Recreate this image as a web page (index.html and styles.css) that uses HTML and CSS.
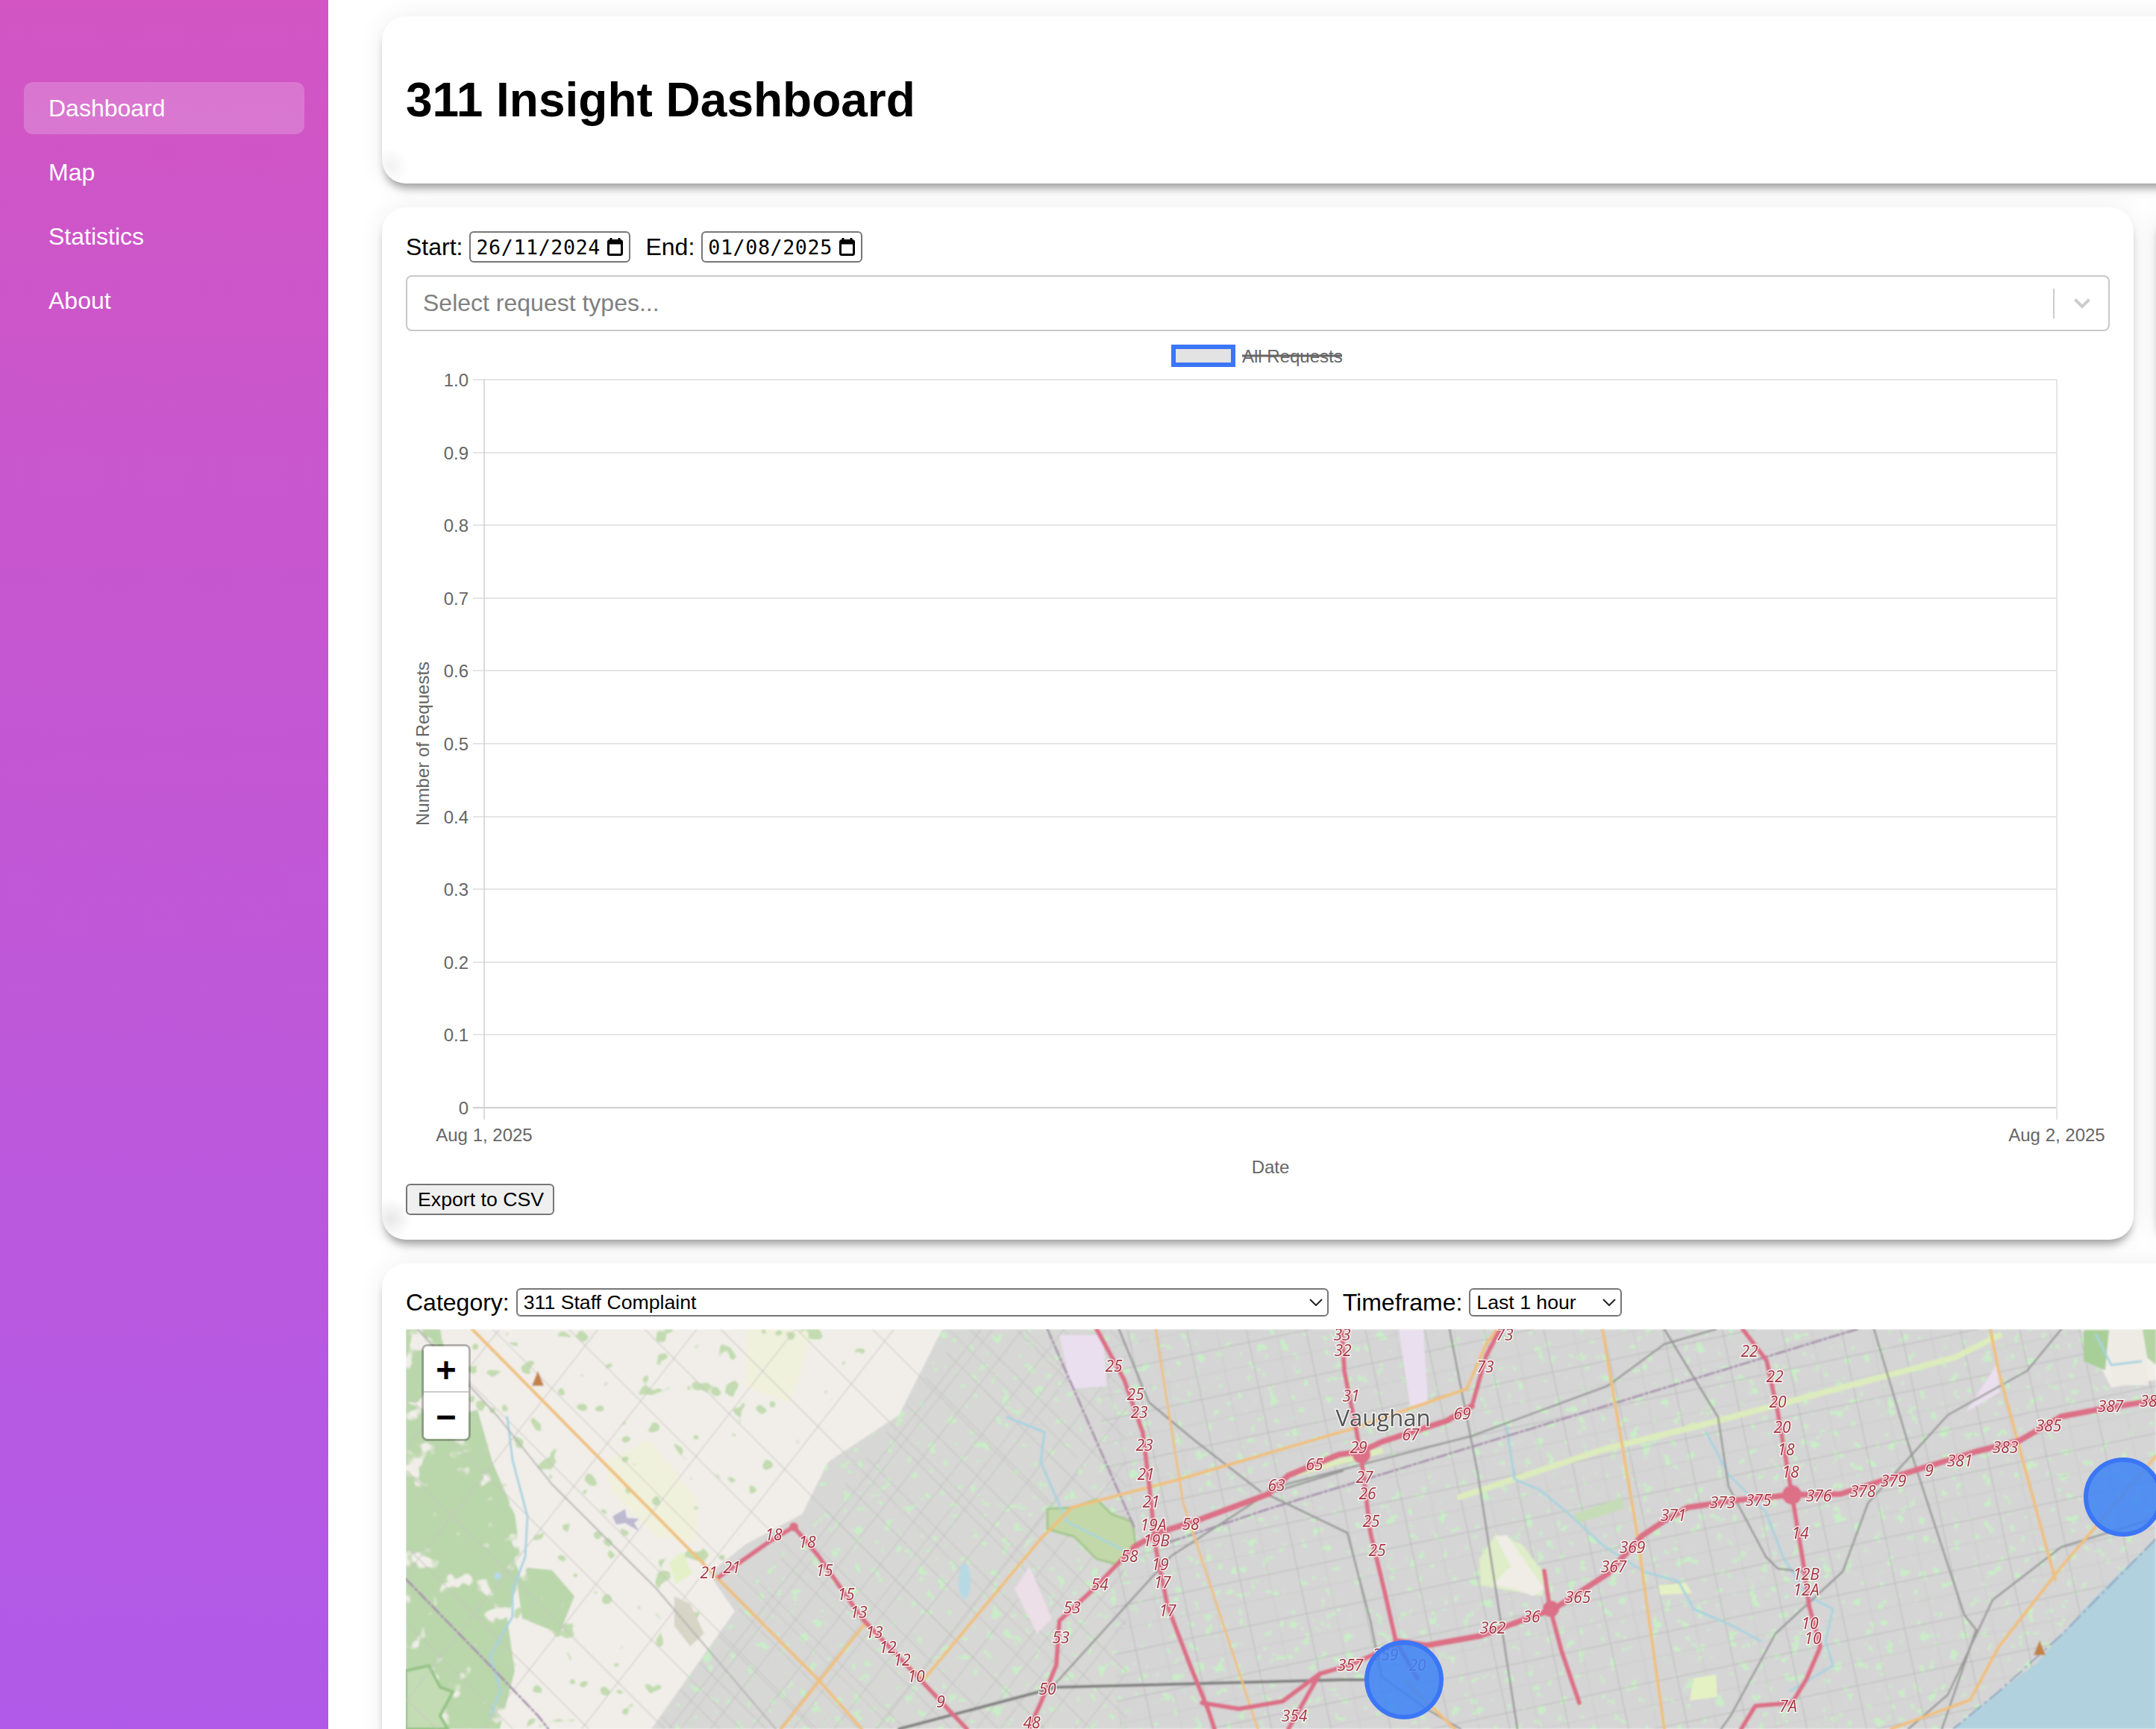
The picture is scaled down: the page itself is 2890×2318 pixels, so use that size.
FILE: index.html
```html
<!DOCTYPE html>
<html lang="en">
<head>
<meta charset="UTF-8">
<title>311 Insight Dashboard</title>
<link rel="stylesheet" href="styles.css">
</head>
<body>
<div class="layout">
    <nav class="sidebar">
        <a class="nav-item active">Dashboard</a>
        <a class="nav-item">Map</a>
        <a class="nav-item">Statistics</a>
        <a class="nav-item">About</a>
    </nav>

    <main class="content">
        <header class="card header-card">
            <h1>311 Insight Dashboard</h1>
        </header>

        <section class="card chart-card">
            <div class="date-row">
                <label class="date-label">Start:</label>
                <div class="date-input">
                    <span>26/11/2024</span>
                    <svg class="cal-icon" viewBox="0 0 21 24"><path d="M5 0v3M16 0v3" stroke="#000" stroke-width="3"/><rect x="1.500" y="3.500" width="18" height="19" rx="2" fill="none" stroke="#000" stroke-width="3"/><rect x="1.500" y="3.500" width="18" height="5" fill="#000"/></svg>
                </div>
                <label class="date-label end-label">End:</label>
                <div class="date-input">
                    <span>01/08/2025</span>
                    <svg class="cal-icon" viewBox="0 0 21 24"><path d="M5 0v3M16 0v3" stroke="#000" stroke-width="3"/><rect x="1.500" y="3.500" width="18" height="19" rx="2" fill="none" stroke="#000" stroke-width="3"/><rect x="1.500" y="3.500" width="18" height="5" fill="#000"/></svg>
                </div>
            </div>

            <div class="multi-select">
                <span class="placeholder">Select request types...</span>
                <span class="multi-sep"></span>
                <svg class="multi-arrow" viewBox="0 0 24 16"><path d="M2.500 2.500 12 12l9.500-9.500" fill="none" stroke="#ccc" stroke-width="4"/></svg>
            </div>

            <svg class="chart" viewBox="544 452 2284 1130">
                <rect x="1573" y="465" width="80" height="24" fill="#e3e3e3" stroke="#3b76f6" stroke-width="6"/>
                <text class="legend-text" x="1665" y="477">All Requests</text>
                <path class="legend-strike" d="M1665 477h134"/>

                <path class="grid-line" d="M634 509H2757M634 607H2757M634 704H2757M634 802H2757M634 899H2757M634 997H2757M634 1095H2757M634 1192H2757M634 1290H2757M634 1387H2757"/>
                <path class="axis-line" d="M634 1485H2757"/>
                <path class="axis-y" d="M649 509V1501"/>
                <path class="grid-line" d="M2757 509V1501"/>

                <text class="tick" x="628" y="509">1.0</text>
                <text class="tick" x="628" y="607">0.9</text>
                <text class="tick" x="628" y="704">0.8</text>
                <text class="tick" x="628" y="802">0.7</text>
                <text class="tick" x="628" y="899">0.6</text>
                <text class="tick" x="628" y="997">0.5</text>
                <text class="tick" x="628" y="1095">0.4</text>
                <text class="tick" x="628" y="1192">0.3</text>
                <text class="tick" x="628" y="1290">0.2</text>
                <text class="tick" x="628" y="1387">0.1</text>
                <text class="tick" x="628" y="1485">0</text>

                <text class="tick-x" x="649" y="1521">Aug 1, 2025</text>
                <text class="tick-x" x="2757" y="1521">Aug 2, 2025</text>
                <text class="tick-x" x="1703" y="1564">Date</text>
                <text class="tick-x" transform="translate(566 997) rotate(-90)">Number of Requests</text>
            </svg>

            <button class="export-btn" type="button">Export to CSV</button>
        </section>

        <section class="card side-card"></section>

        <section class="card map-card">
            <div class="filter-row">
                <label class="filter-label" for="category">Category:</label>
                <select class="filter-select category-select" id="category">
                    <option>311 Staff Complaint</option>
                </select>
                <label class="filter-label timeframe-label" for="timeframe">Timeframe:</label>
                <select class="filter-select timeframe-select" id="timeframe">
                    <option>Last 1 hour</option>
                </select>
            </div>

            <div class="map">
                <svg class="map-svg" viewBox="544 1782 2346 536">
                    <defs>
                        <pattern id="gridEast" width="78" height="62" patternUnits="userSpaceOnUse" patternTransform="rotate(-12 1700 2000)">
                            <path d="M0 0H78M0 0V62" stroke="#b8b8b8" stroke-width="2"/>
                            <path d="M0 31H78M39 0V62" stroke="#cbcbcb" stroke-width="1"/>
                        </pattern>
                        <pattern id="gridWest" width="44" height="44" patternUnits="userSpaceOnUse" patternTransform="rotate(45 1200 2100) skewX(7)">
                            <path d="M0 0H44M0 0V44" stroke="#bbb" stroke-width="1.500"/>
                        </pattern>
                        <pattern id="gridRural" width="105" height="72" patternUnits="userSpaceOnUse" patternTransform="rotate(45 800 2000) skewX(7)">
                            <path d="M0 0H105M0 0V72" stroke="#c6c5c1" stroke-width="2"/>
                        </pattern>
                        <filter id="blur" x="0" y="0" width="1" height="1"><feGaussianBlur stdDeviation="0.900"/></filter>
                        <filter id="forest" x="0" y="0" width="1" height="1" color-interpolation-filters="sRGB">
                            <feTurbulence type="fractalNoise" baseFrequency="0.028" numOctaves="3" seed="4"/>
                            <feColorMatrix type="matrix" values="0 0 0 0 0.73  0 0 0 0 0.84  0 0 0 0 0.67  12 0 0 0 -3.6"/>
                            <feComposite in2="SourceAlpha" operator="in"/>
                        </filter>
                        <filter id="fields" x="0" y="0" width="1" height="1" color-interpolation-filters="sRGB">
                            <feTurbulence type="fractalNoise" baseFrequency="0.04" numOctaves="2" seed="11"/>
                            <feColorMatrix type="matrix" values="0 0 0 0 0.76  0 0 0 0 0.86  0 0 0 0 0.69  24 0 0 0 -16.300"/>
                            <feComposite in2="SourceAlpha" operator="in"/>
                        </filter>
                        <filter id="parks" x="0" y="0" width="1" height="1" color-interpolation-filters="sRGB">
                            <feTurbulence type="fractalNoise" baseFrequency="0.07" numOctaves="3" seed="7"/>
                            <feColorMatrix type="matrix" values="0 0 0 0 0.79  0 0 0 0 0.93  0 0 0 0 0.78  16 0 0 0 -10.400"/>
                            <feComposite in2="SourceAlpha" operator="in"/>
                        </filter>
                    </defs>

                    <g filter="url(#blur)">
                        <rect x="544" y="1782" width="2346" height="536" fill="#f1eee9"/>

                        <!-- farmland -->
                        <path d="M810 1960 870 1930 934 2010 934 2067 880 2060 820 2000Z" fill="#f0f1dd"/>
                        <path d="M1000 1782H1090L1060 1880 1000 1860Z" fill="#f0f1dd"/>
                        <path d="M544 1782H1180L1000 2040 860 2318H544Z" fill="#fff" filter="url(#fields)"/>

                        <!-- forest on the west edge -->
                        <path d="M544 1880 600 1900 640 1890 660 1960 690 2030 700 2100 680 2170 690 2240 670 2318H544Z" fill="#fff" filter="url(#forest)"/>
                        <path d="M544 1782 590 1782 600 1830 560 1880 544 1880Z" fill="#fff" filter="url(#forest)"/>
                        <path d="M544 2240 575 2233 590 2262 607 2268 590 2300 600 2318H544Z" fill="#c3dcb4" stroke="#94c486" stroke-width="4"/>
                        <path d="M690 2100 740 2105 770 2140 750 2190 700 2170Z" fill="#fff" filter="url(#forest)"/>

                        <!-- built up land -->
                        <path d="M1263 1782 1205 1897 1110 1960 1075 2030 1000 2070 950 2110 985 2160 873 2318H1510V1782Z" fill="#d7d7d5"/>
                        <path d="M1470 1782H2790L2830 1860 2890 1850V2318H1500Z" fill="#d5d5d5"/>
                        <path d="M1263 1782 1205 1897 1110 1960 1075 2030 985 2160 873 2318H1510V1782Z" fill="#fff" filter="url(#parks)"/>
                        <path d="M1470 1782H2790L2830 1860 2890 1850V2318H1500Z" fill="#fff" filter="url(#parks)"/>

                        <rect x="544" y="1782" width="900" height="536" fill="url(#gridRural)"/>
                        <path d="M1180 1930 1100 2030 1010 2130 873 2318H1510V1782H1290Z" fill="url(#gridWest)"/>
                        <path d="M1470 1782H2790L2830 1860 2890 1850V2318H1500Z" fill="url(#gridEast)"/>

                        <!-- parks and special areas -->
                        <path d="M904 2140 925 2150 944 2190 925 2207 904 2180Z" fill="#d6d5c6"/>
                        <path d="M897 2095 915 2080 928 2110 905 2124Z" fill="#e4f1c8"/>
                        <path d="M821 2033 838 2023 840 2035 857 2036 850 2042 857 2053 838 2042 826 2044Z" fill="#bcb9d0"/>
                        <path d="M1404 2023 1437 2021 1470 2010 1490 2030 1518 2040 1522 2070 1500 2098 1470 2090 1440 2060 1404 2050Z" fill="#c3d8a8" stroke="#a3c78d" stroke-width="3"/>
                        <path d="M1420 1790H1478L1484 1858 1436 1862Z" fill="#eadfee"/>
                        <path d="M1875 1782H1908L1914 1880 1890 1885Z" fill="#eadfee"/>
                        <path d="M2635 1893 2678 1827 2680 1867Z" fill="#eadfee"/>
                        <path d="M1380 2100 1410 2170 1390 2190 1360 2130Z" fill="#ecdfe8"/>
                        <path d="M1983 2090 2005 2057 2040 2070 2070 2110 2068 2140 2010 2130 1985 2125Z" fill="#dfedc8"/>
                        <path d="M2005 2060 2020 2058 2070 2130 2055 2140 2030 2130 2000 2125 2025 2100Z" fill="#f0ece6"/>
                        <path d="M2110 2030 2175 2007 2177 2022 2115 2042Z" fill="#c6dcb6"/>
                        <path d="M2223 2125 2260 2122 2268 2136 2225 2138Z" fill="#e4f1c2"/>
                        <path d="M2270 2250 2300 2245 2302 2275 2265 2280Z" fill="#e4f1c2"/>
                        <path d="M2793 1783H2827L2822 1837 2793 1825Z" fill="#a9cf98"/>
                        <path d="M2827 1782H2872L2880 1857H2830Z" fill="#eeebe4"/>
                        <path d="M2872 1782H2890V1830L2878 1820Z" fill="#b5d3a4"/>
                        <path class="corridor" d="M1957 2007 2150 1943 2283 1910 2620 1820 2680 1790"/>
                        <path class="corridor" d="M1740 1975 1850 1945"/>

                        <!-- water -->
                        <path d="M2890 2063 2840 2110 2800 2150 2762 2193 2730 2230 2679 2268 2640 2300 2618 2318H2890Z" fill="#b0d1dd"/>
                        <path d="M2890 2063 2762 2193 2679 2268 2618 2318" fill="none" stroke="#8e9fc0" stroke-width="2" stroke-dasharray="22 5 4 5"/>
                        <ellipse cx="1293" cy="2120" rx="8" ry="24" fill="#b7d9e4"/>
                        <circle cx="667" cy="2113" r="5" fill="#b7d9e4"/>
                        <path class="river" d="M680 1900 687 1957 707 2033 704 2087 687 2133 687 2167 657 2220 671 2267 657 2300"/>
                        <path class="river" d="M1350 1900 1400 1920 1395 1960 1430 2040 1510 2080"/>
                        <path class="river" d="M2020 1913 2030 1983 2063 1997 2100 2027 2150 2073 2203 2107 2250 2120 2270 2157 2323 2180 2360 2200"/>
                        <path class="river" d="M2287 1920 2317 1977 2367 2027 2390 2087 2423 2140 2457 2157 2447 2200 2457 2233 2400 2267"/>
                        <path class="river" d="M2810 1790 2830 1830 2870 1825"/>

                        <!-- rail and major roads -->
                        <path class="rail" d="M2489 1782 1700 2023 1560 2070"/>
                        <path class="rail" d="M544 2117 654 2230 721 2300 735 2318"/>
                        <path class="rail" d="M1404 1782 1520 2047"/>
                        <path class="road" d="M1943 1782 1981 1976 2034 2318"/>
                        <path class="road" d="M1700 1996 1973 1925 2155 1858 2231 1802 2300 1782"/>
                        <path class="road" d="M2231 1782 2303 1900 2317 1993 2367 2087 2383 2103 2417 2107"/>
                        <path class="road" d="M2512 1782 2558 1936 2633 2165 2649 2185 2603 2318"/>
                        <path class="road" d="M2763 1782 2717 1838 2611 1897 2504 2015 2470 2107 2380 2190 2320 2300 2307 2318"/>
                        <path class="road" d="M2890 2035 2763 2074 2671 2145 2611 2272 2558 2318"/>
                        <path class="road" d="M1412 2260 1570 2086 1698 2003 1800 1972"/>
                        <path class="road" d="M1698 2003 1806 2055 1837 2173 1852 2248 1912 2291 1958 2318"/>
                        <path class="road" d="M1500 1782 1540 1880 1600 1930 1690 2000"/>
                        <path class="road-dark" d="M1205 2318 1416 2262 1800 2252 1829 2252"/>
                        <path class="road-soft" d="M560 1782 668 1900 740 1990 880 2130 1040 2318"/>

                        <!-- trunk roads -->
                        <path class="trunk" d="M633 1782 832 1984 964 2118 1097 2252 1155 2318"/>
                        <path class="trunk" d="M1047 2318 1159 2177 1238 2252"/>
                        <path class="trunk" d="M1238 2252 1395 2063 1437 2021 1578 1984 1814 1915 1966 1862 1992 1802 2007 1782"/>
                        <path class="trunk thin" d="M1549 1782 1586 2015 1686 2318"/>
                        <path class="trunk" d="M2148 1782 2193 2047 2231 2318"/>
                        <path class="trunk" d="M2668 1782 2679 1838 2755 2118"/>
                        <path class="trunk" d="M2890 1952 2762 2102 2679 2208 2641 2279 2535 2318"/>
                        <path class="trunk" d="M1882 2252 1950 2318"/>

                        <!-- motorways -->
                        <path class="motorway wide" d="M1871 2200 1912 2206 1985 2193 2049 2169 2083 2157 2155 2110 2201 2059 2231 2039 2262 2021 2330 2011 2402 2004 2467 2003 2558 1974 2649 1946 2706 1932 2763 1899 2816 1889 2890 1877"/>
                        <path class="motorway" d="M2336 1782 2368 1824 2383 1893 2402 2004 2417 2094 2425 2153 2440 2208 2421 2252 2402 2283 2353 2287 2334 2318"/>
                        <path class="motorway" d="M1799 1782 1802 1838 1818 1917 1825 1956 1837 2055 1856 2134 1871 2200 1900 2250"/>
                        <path class="motorway wide" d="M1700 2003 1727 1978 1795 1950 1825 1946 1852 1933 1939 1905 1973 1885"/>
                        <path class="motorway" d="M1973 1885 1992 1818 2011 1782"/>
                        <path class="motorway wide" d="M1700 2003 1603 2039 1553 2055 1520 2074"/>
                        <path class="motorway" d="M1520 2074 1462 2134 1420 2173 1416 2232 1395 2283 1379 2318"/>
                        <path class="motorway" d="M1470 1782 1507 1850 1532 1921 1541 1996 1549 2074 1565 2153 1595 2232 1619 2291 1628 2318"/>
                        <path class="motorway" d="M1611 2283 1661 2291 1719 2281 1769 2244 1810 2232 1871 2205"/>
                        <path class="motorway" d="M1769 2244 1727 2318"/>
                        <path class="motorway" d="M964 2114 1031 2067 1064 2047 1097 2086 1155 2169 1230 2248 1296 2318"/>
                        <path class="motorway" d="M2070 2106 2077 2153 2093 2213 2117 2283"/>
                        <circle class="junction" cx="2402" cy="2004" r="13"/>
                        <circle class="junction" cx="2079" cy="2157" r="11"/>
                        <circle class="junction" cx="1825" cy="1950" r="12"/>
                        <circle class="junction" cx="1064" cy="2047" r="6"/>

                        <path d="M721 1838 729 1858H713Z" fill="#c2824a"/>
                        <path d="M2734 2199 2742 2219H2726Z" fill="#c2824a"/>
                    </g>

                    <text class="town" x="1854" y="1900">Vaughan</text>

                    <text class="hw" x="1037" y="2057">18</text><text class="hw" x="1082" y="2067">18</text><text class="hw" x="950" y="2108">21</text><text class="hw" x="981" y="2101">21</text>
                    <text class="hw" x="1105" y="2105">15</text><text class="hw" x="1134" y="2137">15</text><text class="hw" x="1151" y="2161">13</text><text class="hw" x="1172" y="2188">13</text>
                    <text class="hw" x="1190" y="2208">12</text><text class="hw" x="1209" y="2225">12</text><text class="hw" x="1228" y="2247">10</text><text class="hw" x="1261" y="2281">9</text>
                    <text class="hw" x="1493" y="1831">25</text><text class="hw" x="1522" y="1869">25</text><text class="hw" x="1527" y="1893">23</text><text class="hw" x="1534" y="1937">23</text>
                    <text class="hw" x="1536" y="1976">21</text><text class="hw" x="1543" y="2013">21</text><text class="hw" x="1546" y="2044">19A</text><text class="hw" x="1550" y="2065">19B</text>
                    <text class="hw" x="1555" y="2097">19</text><text class="hw" x="1558" y="2121">17</text><text class="hw" x="1565" y="2159">17</text><text class="hw" x="1596" y="2043">58</text>
                    <text class="hw" x="1514" y="2086">58</text><text class="hw" x="1474" y="2124">54</text><text class="hw" x="1437" y="2155">53</text><text class="hw" x="1422" y="2195">53</text>
                    <text class="hw" x="1404" y="2264">50</text><text class="hw" x="1383" y="2309">48</text><text class="hw" x="1711" y="1991">63</text><text class="hw" x="1762" y="1963">65</text>
                    <text class="hw" x="1735" y="2300">354</text><text class="hw" x="1799" y="1789">33</text><text class="hw" x="1800" y="1810">32</text><text class="hw" x="1811" y="1871">31</text>
                    <text class="hw" x="2017" y="1789">73</text><text class="hw" x="1991" y="1832">73</text><text class="hw" x="1960" y="1895">69</text><text class="hw" x="1891" y="1923">67</text>
                    <text class="hw" x="1821" y="1940">29</text><text class="hw" x="1829" y="1980">27</text><text class="hw" x="1833" y="2002">26</text><text class="hw" x="1838" y="2039">25</text>
                    <text class="hw" x="1846" y="2078">25</text><text class="hw" x="1810" y="2232">357</text><text class="hw" x="2001" y="2182">362</text><text class="hw" x="2053" y="2167">36</text>
                    <text class="hw" x="2115" y="2141">365</text><text class="hw" x="2163" y="2100">367</text><text class="hw" x="2188" y="2074">369</text><text class="hw" x="2243" y="2031">371</text>
                    <text class="hw" x="2309" y="2014">373</text><text class="hw" x="2357" y="2011">375</text><text class="hw" x="2438" y="2005">376</text><text class="hw" x="2497" y="1999">378</text>
                    <text class="hw" x="2538" y="1985">379</text><text class="hw" x="2586" y="1971">9</text><text class="hw" x="2627" y="1958">381</text><text class="hw" x="2688" y="1940">383</text>
                    <text class="hw" x="2746" y="1911">385</text><text class="hw" x="2829" y="1885">387</text><text class="hw" x="2880" y="1878">38</text><text class="hw" x="2345" y="1811">22</text>
                    <text class="hw" x="2379" y="1845">22</text><text class="hw" x="2383" y="1879">20</text><text class="hw" x="2389" y="1913">20</text><text class="hw" x="2394" y="1943">18</text>
                    <text class="hw" x="2400" y="1973">18</text><text class="hw" x="2413" y="2055">14</text><text class="hw" x="2421" y="2110">12B</text><text class="hw" x="2421" y="2131">12A</text>
                    <text class="hw" x="2426" y="2176">10</text><text class="hw" x="2430" y="2196">10</text><text class="hw" x="2397" y="2287">7A</text>
                    <text class="hw" x="1857" y="2218">359</text><text class="hw" x="1900" y="2232">20</text>

                    <circle class="marker" cx="1882" cy="2252" r="50"/>
                    <circle class="marker" cx="2846" cy="2007" r="50"/>
                </svg>

                <div class="zoom-control">
                    <a class="zoom-btn zoom-in">+</a>
                    <a class="zoom-btn">&#8722;</a>
                </div>
            </div>
        </section>
    </main>
</div>
</body>
</html>
```

FILE: styles.css
```css
* {
    box-sizing: border-box;
}
html, body {
    height: 100%;
}
body {
    margin: 0;
    overflow: hidden;
    font-family: "Liberation Sans", Arial, sans-serif;
    background-color: #fff;
}
.layout {
    display: flex;
    height: 100vh;
}

/* sidebar */
.sidebar {
    flex: 0 0 440px;
    display: flex;
    flex-direction: column;
    gap: 16px;
    padding: 110px 32px 0;
    background: linear-gradient(180deg, #d255c3, #b05ae9);
}
.nav-item {
    height: 70px;
    display: flex;
    align-items: center;
    padding-left: 33px;
    border-radius: 12px;
    color: #fff;
    font-size: 32px;
}
.nav-item.active {
    background-color: rgba(255,255,255,0.2);
}

/* cards */
.content {
    flex: 1;
    min-width: 0;
    overflow: hidden;
    display: grid;
    grid-template-columns: 2348px 2348px;
    grid-auto-rows: min-content;
    column-gap: 30px;
    row-gap: 32px;
    padding: 22px 0 0 72px;
}
.card {
    padding: 32px;
    border-radius: 32px;
    background-color: #fff;
    box-shadow: 0 0 34px rgba(0,0,0,0.07), 0 10px 12px -4px rgba(0,0,0,0.36);
}
.header-card, .map-card {
    grid-column: 1 / 3;
}
.header-card {
    height: 224px;
    background-image: radial-gradient(circle 24px at 12px calc(100% - 24px), rgba(0,0,0,0.05), rgba(0,0,0,0));
}
.header-card h1 {
    margin: 43px 0;
    font-size: 64px;
    line-height: 74px;
}
.chart-card {
    height: 1384px;
    background-image: radial-gradient(circle 28px at 12px calc(100% - 28px), rgba(0,0,0,0.09), rgba(0,0,0,0));
}

/* date filters */
.date-row {
    display: flex;
    align-items: center;
    height: 42px;
}
.date-label {
    font-size: 32px;
    margin-right: 9px;
}
.end-label {
    margin-left: 20px;
    margin-right: 9px;
}
.date-input {
    width: 216px;
    height: 42px;
    display: flex;
    align-items: center;
    justify-content: space-between;
    padding: 0 8px 0 7px;
    border: 2px solid #767676;
    border-radius: 6px;
    font-family: "DejaVu Sans Mono", monospace;
    font-size: 26.67px;
    letter-spacing: 0.6px;
}
.cal-icon {
    width: 21px;
    height: 24px;
}

/* multi select */
.multi-select {
    height: 75px;
    margin-top: 17px;
    display: flex;
    align-items: center;
    padding: 0 23px 0 21px;
    border: 2px solid #c8c8c8;
    border-radius: 8px;
}
.placeholder {
    flex: 1;
    font-size: 32px;
    color: #808080;
}
.multi-sep {
    width: 2px;
    height: 40px;
    background-color: #ccc;
}
.multi-arrow {
    width: 24px;
    height: 16px;
    margin-left: 25px;
}

/* chart */
.chart {
    display: block;
    width: 2284px;
    height: 1130px;
    margin-top: 8px;
}
.grid-line {
    fill: none;
    stroke: #e5e5e5;
    stroke-width: 2;
}
.axis-line {
    fill: none;
    stroke: #cfcfcf;
    stroke-width: 2;
}
.axis-y {
    fill: none;
    stroke: #cfcfcf;
    stroke-width: 1.5;
}
.tick, .tick-x, .legend-text {
    font-family: "Liberation Sans", Arial, sans-serif;
    font-size: 24px;
    fill: #666;
    dominant-baseline: central;
}
.tick {
    text-anchor: end;
}
.tick-x {
    text-anchor: middle;
}
.legend-strike {
    stroke: #666;
    stroke-width: 3;
}
.export-btn {
    display: block;
    width: 199px;
    height: 42px;
    margin-top: 5px;
    padding: 0 0 0 2px;
    background-color: #efefef;
    border: 2px solid #767676;
    border-radius: 6px;
    font-family: "Liberation Sans", Arial, sans-serif;
    font-size: 26.67px;
    color: #000;
}

/* map card */
.filter-row {
    display: flex;
    align-items: center;
    height: 40px;
    margin-bottom: 16px;
}
.filter-label {
    font-size: 32px;
    margin-right: 9px;
}
.timeframe-label {
    margin-left: 19px;
}
.filter-select {
    appearance: none;
    height: 38px;
    padding: 0 4px 0 8px;
    background-color: #fff;
    background-image: url("data:image/svg+xml,%3Csvg xmlns='http://www.w3.org/2000/svg' viewBox='0 0 18 10'%3E%3Cpath d='M1 1l8 8 8-8' fill='none' stroke='%23222' stroke-width='2'/%3E%3C/svg%3E");
    background-repeat: no-repeat;
    background-position: right 6px center;
    background-size: 18px 10px;
    border: 2px solid #767676;
    border-radius: 6px;
    font-family: "Liberation Sans", Arial, sans-serif;
    font-size: 26.67px;
    color: #000;
}
.category-select {
    width: 1089px;
}
.timeframe-select {
    width: 205px;
}
.map {
    position: relative;
    width: 2346px;
    height: 536px;
}
.map-svg {
    display: block;
    width: 2346px;
    height: 536px;
}
.road, .road-dark, .road-soft, .rail, .river, .trunk, .motorway, .corridor {
    fill: none;
    stroke-linejoin: round;
    stroke-linecap: round;
}
.road {
    stroke: #979797;
    stroke-width: 2.5;
}
.road-dark {
    stroke: #828282;
    stroke-width: 4;
}
.road-soft {
    stroke: #b5b5b3;
    stroke-width: 2;
}
.rail {
    stroke: #a993ae;
    stroke-width: 3;
    stroke-dasharray: 14 4 3 4;
}
.river {
    stroke: #a8d3df;
    stroke-width: 3;
}
.corridor {
    stroke: #dcecbc;
    stroke-width: 8;
}
.trunk {
    stroke: #efc07a;
    stroke-width: 4;
}
.trunk.thin {
    stroke-width: 3;
}
.motorway {
    stroke: #dc6f87;
    stroke-width: 6;
}
.motorway.wide {
    stroke-width: 8;
}
.junction {
    fill: #dc6f87;
}
.hw {
    font-family: "Open Sans", sans-serif;
    font-style: italic;
    font-size: 21px;
    fill: #a5343f;
    stroke: rgba(255,255,255,0.7);
    stroke-width: 3px;
    paint-order: stroke;
    text-anchor: middle;
    dominant-baseline: central;
}
.town {
    font-family: "Open Sans", sans-serif;
    font-size: 31px;
    fill: #555;
    stroke: rgba(255,255,255,0.7);
    stroke-width: 3px;
    paint-order: stroke;
    text-anchor: middle;
    dominant-baseline: central;
}
.marker {
    fill: #3b82f6;
    fill-opacity: 0.85;
    stroke: #3b76f6;
    stroke-width: 6;
}

/* zoom buttons over the map */
.zoom-control {
    position: absolute;
    top: 20px;
    left: 21px;
    width: 66px;
    display: flex;
    flex-direction: column;
    border: 3px solid rgba(0,0,0,0.25);
    border-radius: 8px;
    overflow: hidden;
}
.zoom-btn {
    height: 62px;
    display: flex;
    align-items: center;
    justify-content: center;
    background-color: #fff;
    color: #000;
    font-family: "DejaVu Sans Mono", monospace;
    font-weight: bold;
    font-size: 44px;
}
.zoom-in {
    border-bottom: 2px solid #ccc;
}
```
